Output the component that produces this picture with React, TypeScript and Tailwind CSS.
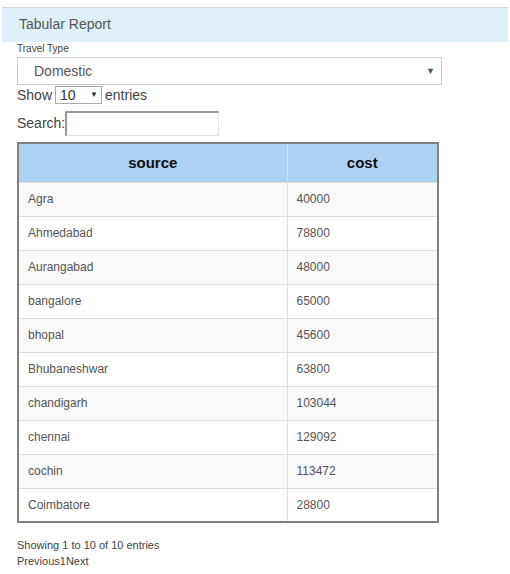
import { useState } from "react";

const rows: [string, number][] = [
  ["Agra", 40000],
  ["Ahmedabad", 78800],
  ["Aurangabad", 48000],
  ["bangalore", 65000],
  ["bhopal", 45600],
  ["Bhubaneshwar", 63800],
  ["chandigarh", 103044],
  ["chennai", 129092],
  ["cochin", 113472],
  ["Coimbatore", 28800],
];

export default function App() {
  const [travelType, setTravelType] = useState("Domestic");
  const [pageSize, setPageSize] = useState("10");
  const [query, setQuery] = useState("");

  return (
    <main className="min-h-[574px] w-[510px] bg-white pt-[7px] font-['Liberation_Sans',Arial,sans-serif] text-[#555]">
      <div className="mx-[2px] h-[35px] border-t border-[#d5d5d5] bg-[#dff0f9] pl-[17px] pt-[6px] text-[14px] text-[#555]">
        Tabular Report
      </div>

      <div className="px-[17px]">
        <div className="text-[10px] leading-[13px] text-[#444]">Travel Type</div>
        <div className="relative mt-[2px] w-[425px]">
          <select
            value={travelType}
            onChange={(e) => setTravelType(e.target.value)}
            className="h-[28px] w-full appearance-none border border-[#ccc] bg-white pl-[16px] text-[14px] text-[#555] outline-none"
          >
            <option>Domestic</option>
            <option>International</option>
          </select>
          <span className="pointer-events-none absolute right-[7px] top-[8px] text-[9px] text-[#555]">▼</span>
        </div>

        <div className="mt-[1px] flex h-[18px] items-center text-[14px] text-[#444]">
          <span>Show</span>
          <div className="relative mx-[3px]">
            <select
              value={pageSize}
              onChange={(e) => setPageSize(e.target.value)}
              className="h-[18px] w-[47px] appearance-none border border-[#aaa] bg-white pl-[4px] text-[14px] leading-[16px] text-[#333] outline-none"
            >
              <option>10</option>
              <option>25</option>
              <option>50</option>
            </select>
            <span className="pointer-events-none absolute right-[4px] top-[4px] text-[8px] text-[#333]">▼</span>
          </div>
          <span>entries</span>
        </div>

        <div className="mt-[7px] flex items-center text-[14px] text-[#444]">
          <span>Search:</span>
          <input
            value={query}
            onChange={(e) => setQuery(e.target.value)}
            className="h-[25px] w-[154px] border border-t-2 border-l-2 border-[#e3e3e3] border-t-[#999] border-l-[#999] bg-white outline-none"
          />
        </div>

        <table className="mt-[6px] w-[422px] border-collapse border-2 border-[#808080] text-[12px]">
          <thead>
            <tr className="h-[39px] bg-[#add1f2]">
              <th className="w-[269px] border-r border-[#cfe3f6] text-center text-[15px] font-bold text-[#111]">
                source
              </th>
              <th className="text-center text-[15px] font-bold text-[#111]">cost</th>
            </tr>
          </thead>
          <tbody>
            {rows.map(([city, cost], i) => (
              <tr
                key={city}
                className={`h-[34px] border-t border-[#ddd] ${i % 2 === 0 ? "bg-[#f9f9f9]" : "bg-white"}`}
              >
                <td className="border-r border-[#ddd] pl-[9px] text-[#555]">{city}</td>
                <td className="pl-[9px] text-[#555]">{cost}</td>
              </tr>
            ))}
          </tbody>
        </table>

        <div className="mt-[14px] text-[11px] leading-[16px] text-[#444]">
          <div>Showing 1 to 10 of 10 entries</div>
          <div>
            <span>Previous</span>
            <span>1</span>
            <span>Next</span>
          </div>
        </div>
      </div>
    </main>
  );
}
